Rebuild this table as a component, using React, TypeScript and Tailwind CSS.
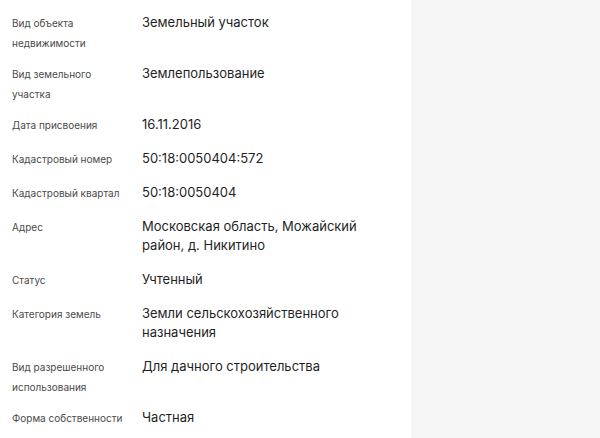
const rows: { label: string; value: string }[] = [
  { label: "Вид объекта недвижимости", value: "Земельный участок" },
  { label: "Вид земельного участка", value: "Землепользование" },
  { label: "Дата присвоения", value: "16.11.2016" },
  { label: "Кадастровый номер", value: "50:18:0050404:572" },
  { label: "Кадастровый квартал", value: "50:18:0050404" },
  { label: "Адрес", value: "Московская область, Можайский район, д. Никитино" },
  { label: "Статус", value: "Учтенный" },
  { label: "Категория земель", value: "Земли сельскохозяйственного назначения" },
  { label: "Вид разрешенного использования", value: "Для дачного строительства" },
  { label: "Форма собственности", value: "Частная" },
];

export default function App() {
  return (
    <div className="flex h-[438px] w-[600px] overflow-hidden bg-white font-['Inter',sans-serif]">
      {/* Характеристики */}
      <div className="w-[411px] shrink-0 pl-3 pr-5 pt-[13px]">
        <div className="flex flex-col gap-[11px]">
          {rows.map((r) => (
            <div key={r.label} className="flex items-start">
              <div className="w-[130px] shrink-0 pr-4 text-[10px] leading-[20px] text-[#4a4a4a]">
                {r.label}
              </div>
              <div className="flex-1 pb-[4px] text-[13px] leading-[19px] text-[#1f1f1f]">
                {r.value}
              </div>
            </div>
          ))}
        </div>
      </div>
      <div className="flex-1 bg-[#f5f5f5]" />
    </div>
  );
}
